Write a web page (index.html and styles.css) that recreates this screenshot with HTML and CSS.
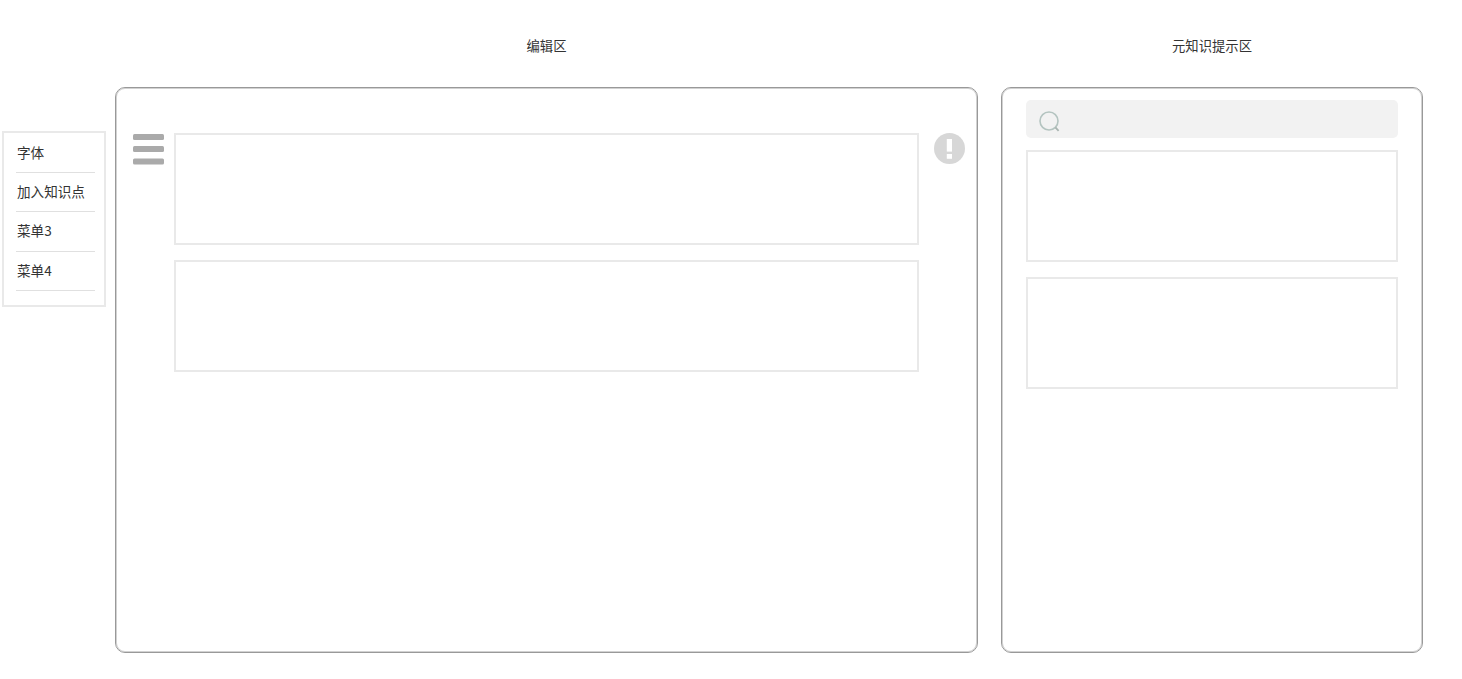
FILE: index.html
```html
<!DOCTYPE html>
<html lang="zh-CN">
<head>
<meta charset="utf-8">
<title>编辑区</title>
<link rel="stylesheet" href="styles.css">
</head>
<body>
<div class="page">
  <nav class="menu">
    <div class="menu-item">字体</div>
    <div class="menu-item">加入知识点</div>
    <div class="menu-item">菜单3</div>
    <div class="menu-item">菜单4</div>
  </nav>
  <section class="column editor-column">
    <div class="column-title">编辑区</div>
    <div class="panel editor-panel">
      <svg class="hamburger" width="31" height="31" viewBox="0 0 31 31" aria-hidden="true">
        <rect x="0" y="0" width="31" height="6" rx="1.5" fill="#aaaaaa"/>
        <rect x="0" y="12" width="31" height="6" rx="1.5" fill="#aaaaaa"/>
        <rect x="0" y="24.4" width="31" height="6" rx="1.5" fill="#aaaaaa"/>
      </svg>
      <div class="stack">
        <div class="box"></div>
        <div class="box"></div>
      </div>
      <svg class="alert" width="31" height="31" viewBox="0 0 31 31" aria-hidden="true">
        <circle cx="15.5" cy="15.5" r="15.5" fill="#d7d7d7"/>
        <rect x="12.8" y="6" width="5.2" height="12.6" fill="#ffffff"/>
        <rect x="12.8" y="21" width="5.2" height="4.8" fill="#ffffff"/>
      </svg>
    </div>
  </section>
  <section class="column hints-column">
    <div class="column-title">元知识提示区</div>
    <div class="panel hints-panel">
      <div class="search">
        <svg width="22" height="22" viewBox="0 0 22 22" aria-hidden="true">
          <circle cx="10" cy="10" r="9" fill="none" stroke="#b4c4c0" stroke-width="1.6"/>
          <path d="M16.4 16.4 L19.6 19.8" fill="none" stroke="#a8b4b0" stroke-width="1.8"/>
        </svg>
      </div>
      <div class="box"></div>
      <div class="box"></div>
    </div>
  </section>
</div>
</body>
</html>
```
FILE: styles.css
```css
* { box-sizing: border-box; }
html, body { margin: 0; padding: 0; background: #ffffff; }
body {
  font-family: "Noto Sans CJK SC", "Liberation Sans", sans-serif;
  font-size: 13.33px;
  color: #333333;
  overflow: hidden;
}
.page {
  display: flex;
  align-items: flex-start;
  padding-left: 2px;
  height: 679px;
}
.menu {
  width: 104px;
  height: 176px;
  margin-top: 131px;
  padding: 1px 9px 0 12px;
  border: 2px solid #e9e9e9;
  font-size: 13.6px;
}
.menu-item {
  height: 39.2px;
  line-height: 36.6px;
  padding-left: 1px;
  border-bottom: 1px solid #e0e0e0;
  white-space: nowrap;
}
.column { display: flex; flex-direction: column; }
.editor-column { width: 863px; margin-left: 9px; }
.hints-column { width: 422px; margin-left: 23px; }
.column-title {
  height: 87px;
  padding-top: 36px;
  line-height: 20px;
  text-align: center;
  white-space: nowrap;
}
.panel {
  height: 566px;
  border: 1px solid #999999;
  border-radius: 10px;
  box-shadow: inset 0 0 0 1px #d2d2d2;
}
.editor-panel {
  display: flex;
  align-items: flex-start;
  padding: 46px 12px 0 17px;
}
.hamburger { flex: none; display: block; }
.stack {
  width: 745px;
  margin: -1px 15px 0 10px;
  display: flex;
  flex-direction: column;
  gap: 15px;
}
.alert { flex: none; display: block; margin-top: -1px; }
.box {
  height: 112px;
  border: 2px solid #e9e9e9;
}
.hints-panel {
  display: flex;
  flex-direction: column;
  gap: 15px;
  padding: 12px 24px 0;
}
.search {
  height: 38px;
  margin-bottom: -3px;
  padding: 11px 0 0 13px;
  background: #f2f2f2;
  border-radius: 5px;
}
.search svg { display: block; }
```
